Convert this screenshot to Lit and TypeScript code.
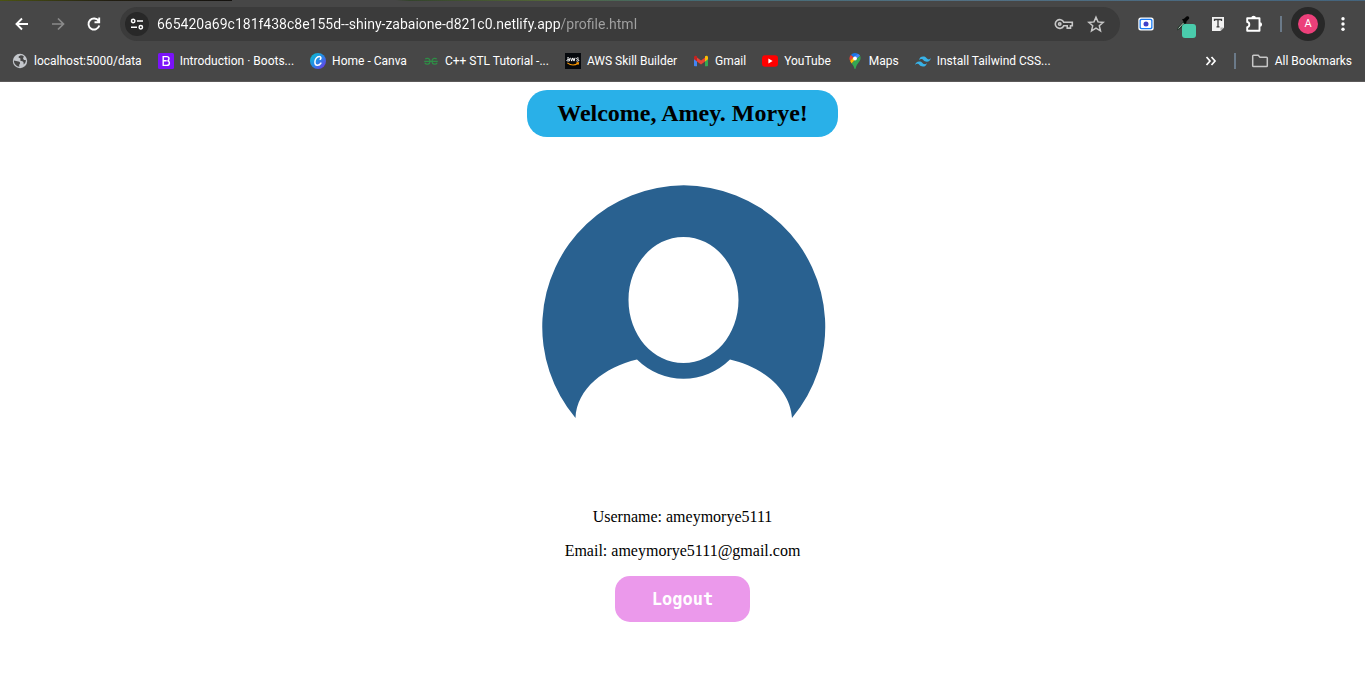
import { LitElement, html, css, svg, TemplateResult } from "lit";
import { customElement, property, state } from "lit/decorators.js";

interface Bookmark {
  label: string;
  icon: TemplateResult;
}

const icon16 = (body: unknown) =>
  html`<svg width="16" height="16" viewBox="0 0 16 16" aria-hidden="true">${body}</svg>`;

const bookmarks: Bookmark[] = [
  {
    label: "localhost:5000/data",
    icon: icon16(svg`<circle cx="8" cy="8" r="7.2" fill="#c4c7cc"/>
      <path d="M1.8 7.5l4.7 1c1.3.4 1.8 1 1.5 1.9l-.9 1.5.3 1.8C4.500 13.600 2 11 1.800 7.500z" fill="#474747"/>
      <path d="M8.700 2.200c-1 .6-2 .7-2.200 1.800.2 1.200 1.700.7 2 1.700.2 1.100-.9 1.300.1 2.100 1 .7 2.300.2 2.800 1.300.3.800.1 1.600.3 2.300 1.500-1.100 2.300-2.700 2.100-4.400-1.500.4-2.400-.2-2.700-1.400-.2-1 .9-1.200.6-2.300-.8-.7-1.800-1.100-3-1.100z" fill="#474747"/>`),
  },
  {
    label: "Introduction · Boots...",
    icon: icon16(svg`<rect width="16" height="16" rx="1.500" fill="#7b12f8"/>
      <path d="M5.200 3.600h3.500c1.500 0 2.300.8 2.300 2.100 0 1-.5 1.700-1.500 2 1.200.2 1.900 1 1.900 2.200 0 1.600-1 2.500-2.800 2.500H5.200zM5.200 7.700h3.500" fill="none" stroke="#fff" stroke-width="1.400"/>`),
  },
  {
    label: "Home - Canva",
    icon: icon16(svg`<defs><linearGradient id="cv" x1="0" y1="0" x2="1" y2="1">
        <stop offset="0" stop-color="#08c6cf"/><stop offset=".5" stop-color="#2687e6"/><stop offset="1" stop-color="#7b2be8"/></linearGradient></defs>
      <circle cx="8" cy="8" r="8" fill="url(#cv)"/>
      <path d="M10.200 6.300c1.100-.8 1-2.800-.9-2.800C6.600 3.500 4.900 6.700 4.900 9.200c0 3.800 4.100 4 6 .9" fill="none" stroke="#fff" stroke-width="1.500" stroke-linecap="round"/>`),
  },
  {
    label: "C++ STL Tutorial -...",
    icon: icon16(svg`<path d="M2.300 6.200c1.200-1.500 4.700-1.200 4.700 2s-3.800 4-5.200 1.500M1.200 8.400h13.600M13.700 6.200C12.500 4.700 9 5 9 8.200s3.800 4 5.200 1.500" fill="none" stroke="#2f8d46" stroke-width="1.300"/>`),
  },
  {
    label: "AWS Skill Builder",
    icon: icon16(svg`<rect width="16" height="16" fill="#06090d"/>
      <path d="M2 5.200c.8-.7 2.300-.6 2.300.5v2.500M4.300 6.400c-3.100-.2-3.100 2-.9 1.600l.9-.6M5.600 4.800l1 3.300 1.200-3.200 1.200 3.200 1-3.300M13.700 5.200c-.8-.6-2.300-.4-2.200.5.1.9 2.300.5 2.300 1.600 0 1-1.600 1.100-2.500.4" fill="none" stroke="#fff" stroke-width="1"/>
      <path d="M2.300 9.900c3.400 2.500 7.500 2.500 10.600.6M11.400 9.900l2.100-.1-.4 1.900" fill="none" stroke="#f90" stroke-width="1.100"/>`),
  },
  {
    label: "Gmail",
    icon: icon16(svg`<path d="M1 4v8.500c0 .5.300.8.800.8H4V6z" fill="#4285f4"/>
      <path d="M15 4v8.500c0 .5-.3.800-.8.800H12V6z" fill="#34a853"/>
      <path d="M4 4.600l4 3 4-3v4l-4 3-4-3z" fill="#ea4335"/>
      <path d="M1 4.300C1 2.700 2.700 2.200 4 3.300v5.300L1 6.300z" fill="#c5221f"/>
      <path d="M15 4.300c0-1.600-1.700-2.100-3-1v5.300l3-2.300z" fill="#fbbc04"/>`),
  },
  {
    label: "YouTube",
    icon: icon16(svg`<rect y="2.300" width="16" height="11.500" rx="3" fill="#f00"/><path d="M6.400 5.600v4.800L10.600 8z" fill="#fff"/>`),
  },
  {
    label: "Maps",
    icon: icon16(svg`<path d="M8 0a5.500 5.500 0 0 0-4.200 2l3 2.500L11 .9A5.500 5.500 0 0 0 8 0z" fill="#1a73e8"/>
      <path d="M3.800 2a5.500 5.500 0 0 0-.7 6l3.500-3.700z" fill="#ea4335"/>
      <path d="M10.800.8L6.500 4.200 8 7.500l5.100-4.700A5.500 5.500 0 0 0 10.800.8z" fill="#4285f4"/>
      <path d="M3.100 8c.4.900 1 1.600 1.600 2.500l4.600-5L6.500 4.300z" fill="#fbbc04"/>
      <path d="M13.100 2.800c.9 2 .4 4.200-.8 5.700C10.500 10.900 9.300 12.700 8.600 15.500c-.2.700-1 .7-1.200 0-.5-2-1.400-3.500-2.700-5z" fill="#34a853"/>
      <circle cx="8" cy="5.500" r="1.900" fill="#fff"/>`),
  },
  {
    label: "Install Tailwind CSS...",
    icon: icon16(svg`<path d="M4 7.200c.6-2.500 2-3.600 4.100-3.600 3.200 0 3.500 2.300 5 2.700 1 .3 2-.1 2.900-1.200-.6 2.500-2 3.600-4.100 3.600-3.200 0-3.500-2.300-5-2.700-1-.3-2 .1-2.900 1.200zM0 12c.6-2.400 2-3.600 4.100-3.600 3.200 0 3.500 2.300 5 2.700 1 .3 2-.1 2.900-1.200-.6 2.500-2 3.600-4.100 3.600-3.200 0-3.500-2.300-5-2.700-1-.3-2 .1-2.900 1.200z" fill="#38b2e8"/>`),
  },
];

@customElement("browser-toolbar")
class BrowserToolbar extends LitElement {
  @property() url = "";

  static styles = css`
    :host {
      display: block;
      background: #474747;
      border-bottom: 1px solid #5c5a5a;
      color: #fff;
      font-family: Roboto, "Noto Sans", sans-serif;
    }
    .backdrop {
      height: 1px;
      background: linear-gradient(90deg, #4c5411, #221e12 8%, #14120f 17%, #474747 17%, #474747 29%, #34442c 30%, #536638 40%, #426a72 50%, #527083 70%, #44647d);
    }
    button {
      display: grid;
      place-items: center;
      padding: 0;
      border: 0;
      background: none;
      color: inherit;
      font: inherit;
    }
    svg {
      display: block;
    }
    .bar {
      display: flex;
      align-items: center;
      padding: 6px 4px 0;
    }
    .tool {
      flex: none;
      width: 36px;
      height: 34px;
    }
    .disabled {
      color: #8b8b8b;
    }
    .omnibox {
      flex: 1;
      min-width: 0;
      display: flex;
      align-items: center;
      height: 34px;
      margin: 0 8px;
      padding: 0 8px 0 5px;
      border-radius: 17px;
      background: #3b3b3b;
    }
    .site {
      flex: none;
      width: 24px;
      height: 24px;
      border-radius: 50%;
      background: #282828;
    }
    .address {
      flex: 1;
      min-width: 0;
      margin: 0 8px;
      padding: 0;
      border: 0;
      outline: 0;
      height: 24px;
      font: 14px Roboto, "Noto Sans", sans-serif;
      color: #fff;
      -webkit-text-fill-color: transparent;
      background: linear-gradient(90deg, #fff 403px, #a2a2a2 403px);
      -webkit-background-clip: text;
      background-clip: text;
    }
    .inner {
      flex: none;
      width: 32px;
      height: 32px;
      color: #c7c7c7;
    }
    .divider {
      flex: none;
      width: 2px;
      height: 16px;
      background: #6b7a89;
    }
    .profile {
      flex: none;
      width: 34px;
      height: 34px;
      margin-left: 9px;
      border-radius: 50%;
      background: #282828;
    }
    .initial {
      width: 20px;
      border-radius: 50%;
      background: #ec407a;
      font: 11px/20px Roboto, sans-serif;
      text-align: center;
    }
    .divider.top {
      margin-left: 8px;
    }
    .bookmarks {
      display: flex;
      align-items: center;
      height: 40px;
      padding: 0 13px 0 12px;
      font-size: 12px;
      line-height: 16px;
      white-space: nowrap;
    }
    .links {
      display: flex;
      gap: 16px;
      margin-right: auto;
    }
    .link,
    .all {
      display: flex;
      align-items: center;
      gap: 6px;
      color: inherit;
      text-decoration: none;
    }
    .more {
      margin-right: 14px;
      width: 18px;
      height: 24px;
    }
    .all {
      margin-left: 15px;
    }
  `;

  render() {
    return html`
      <div class="backdrop"></div>
      <div class="bar">
        <button class="tool" aria-label="Back">
          <svg width="16" height="16" viewBox="0 0 16 16" fill="none" stroke="currentColor" stroke-width="1.900"><path d="M14 8H3M8 2.500L2.500 8 8 13.500"/></svg>
        </button>
        <button class="tool disabled" aria-label="Forward">
          <svg width="16" height="16" viewBox="0 0 16 16" fill="none" stroke="currentColor" stroke-width="1.700"><path d="M2 8h11M8 2.500L13.500 8 8 13.500"/></svg>
        </button>
        <button class="tool" aria-label="Reload">
          <svg width="16" height="16" viewBox="0 0 16 16" fill="none" stroke="currentColor" stroke-width="1.900"><path d="M12.600 5A5.500 5.500 0 1 0 13.300 9.500M13.200 1.500v4.800H8.500"/></svg>
        </button>
        <div class="omnibox">
          <button class="site" aria-label="Site information">
            <svg width="14" height="14" viewBox="0 0 14 14" fill="none" stroke="#fff" stroke-width="1.500"><circle cx="3.200" cy="4" r="1.700"/><path d="M7 4h6M1 10.300h6"/><circle cx="10.800" cy="10.300" r="1.700"/></svg>
          </button>
          <input class="address" aria-label="Address" spellcheck="false" .value=${this.url} />
          <button class="inner" aria-label="Passwords">
            <svg width="20" height="16" viewBox="0 0 20 16" fill="none" stroke="currentColor" stroke-width="1.600"><path d="M9.700 6.200h8.600v3.600h-1.800v2.300h-3.300V9.800H9.700A4.400 4.400 0 1 1 9.700 6.200z"/><circle cx="5.700" cy="8" r="1.200"/></svg>
          </button>
          <button class="inner" aria-label="Bookmark this page">
            <svg width="18" height="18" viewBox="0 0 18 18" fill="none" stroke="currentColor" stroke-width="1.500"><path d="M9 2.200l2 4.700 5.200.5-3.900 3.400 1.200 5.100L9 13.200l-4.500 2.700 1.200-5.100-3.900-3.400L7 6.900z"/></svg>
          </button>
        </div>
        <button class="tool" aria-label="Screen recorder">
          <svg width="16" height="16" viewBox="0 0 16 16"><rect x=".3" y="1.500" width="15.400" height="13" rx="2.500" fill="#fff"/><rect x="1.500" y="2.700" width="13" height="10.600" rx="1.800" fill="#1a7cf5"/><rect x="2.800" y="4" width="10.400" height="8" rx="1" fill="#fff"/><circle cx="8" cy="8" r="2.500" fill="#4040c8"/></svg>
        </button>
        <button class="tool" aria-label="Color picker">
          <svg width="28" height="28" viewBox="0 0 28 28"><path d="M9 20.500l1-3.500 6-6 2 2-5.500 5.500z" fill="#20382a"/><path d="M10.500 18.500L15.500 13" stroke="#b9c2bb" stroke-width="1"/><path d="M14 9.200l2-.5 2.200-2c2-1.500 4 .6 2.600 2.400l-2.200 2.200-.4 2-1.500.4z" fill="#050505"/><rect x="14" y="14" width="14" height="14" rx="3" fill="#4accac"/></svg>
        </button>
        <button class="tool" aria-label="Text tool">
          <svg width="14" height="16" viewBox="0 0 14 16"><path d="M1 1h12v10.500L9.500 15H1z" fill="#f2f2f2"/><path d="M13 11.500H9.500V15z" fill="#b4b4b4"/><path d="M3.500 5V3.500h7V5M7 3.500v7M5.500 10.800h3" fill="none" stroke="#3c3c3c" stroke-width="1.300"/></svg>
        </button>
        <button class="tool" aria-label="Extensions">
          <svg width="18" height="18" viewBox="0 0 18 18"><path d="M2.200 3.200H14.500V15.700H2.200V12.200C5 12 5 7.200 2.200 7z" fill="none" stroke="#fff" stroke-width="1.900" stroke-linejoin="round"/><path d="M6.300 3a2.300 2.300 0 0 1 4.600 0zM14.800 7.200a2.300 2.300 0 0 1 0 4.600z" fill="#fff"/></svg>
        </button>
        <span class="divider top"></span>
        <button class="profile" aria-label="Profile"><span class="initial">A</span></button>
        <button class="tool" aria-label="Menu">
          <svg width="16" height="16" viewBox="0 0 16 16" fill="#fff"><circle cx="8" cy="2.700" r="1.700"/><circle cx="8" cy="8" r="1.700"/><circle cx="8" cy="13.300" r="1.700"/></svg>
        </button>
      </div>
      <nav class="bookmarks" aria-label="Bookmarks">
        <div class="links">
          ${bookmarks.map((b) => html`<a class="link" href="#">${b.icon}<span>${b.label}</span></a>`)}
        </div>
        <button class="more" aria-label="More bookmarks">
          <svg width="12" height="12" viewBox="0 0 12 12" fill="none" stroke="#fff" stroke-width="1.700"><path d="M1.500 2L5 6l-3.500 4M6.500 2L10 6l-3.500 4"/></svg>
        </button>
        <span class="divider"></span>
        <button class="all">
          <svg width="18" height="16" viewBox="0 0 18 16" fill="none" stroke="#c7c7c7" stroke-width="1.500"><path d="M2.500 2.200h4.700L9 4.200h6.500c.5 0 .8.300.8.800v7.800c0 .5-.3.800-.8.800h-13c-.5 0-.8-.3-.8-.8V3c0-.5.300-.8.800-.8z"/></svg>
          <span>All Bookmarks</span>
        </button>
      </nav>
    `;
  }
}

@customElement("app-root")
class AppRoot extends LitElement {
  @state() name = "Amey. Morye";
  @state() username = "ameymorye5111";
  @state() email = "ameymorye5111@gmail.com";

  static styles = css`
    :host {
      display: block;
      min-height: 100vh;
      background: #fff;
      color: #000;
      font: 16px/18px "Liberation Serif", serif;
    }
    .page {
      display: flex;
      flex-direction: column;
      align-items: center;
      padding: 8px;
    }
    .welcome {
      margin: 0 0 20px;
      padding: 10px 30px;
      border-radius: 20px;
      background: #29b0e8;
      font-size: 24px;
      line-height: 27px;
    }
    .avatar {
      display: block;
      width: 336px;
      max-width: 100%;
    }
    .detail {
      margin: 16px 0 0;
    }
    .logout {
      margin-top: 16px;
      padding: 12px 37px;
      border: 0;
      border-radius: 15px;
      background: #eb99eb;
      color: #fff;
      font: bold 17px/22px "DejaVu Sans Mono", monospace;
    }
  `;

  render() {
    return html`
      <browser-toolbar url="665420a69c181f438c8e155d--shiny-zabaione-d821c0.netlify.app/profile.html"></browser-toolbar>
      <main class="page">
        <h2 class="welcome">Welcome, ${this.name}!</h2>
        <svg class="avatar" viewBox="0.500 0 336 335" role="img" aria-label="Profile picture">
          <path
            fill="#296190"
            fill-rule="evenodd"
            d="M61 261A141.500 141.500 0 1 1 277.500 261C276 232 248 210 215.500 202.500A66 66 0 0 1 122.500 202.500C90 210 62 232 61 261ZM169 80C138.500 80 114 108 114 143S138.500 206 169 206S224 178 224 143S199.500 80 169 80Z"
          />
        </svg>
        <p class="detail">Username: ${this.username}</p>
        <p class="detail">Email: ${this.email}</p>
        <button class="logout">Logout</button>
      </main>
    `;
  }
}
